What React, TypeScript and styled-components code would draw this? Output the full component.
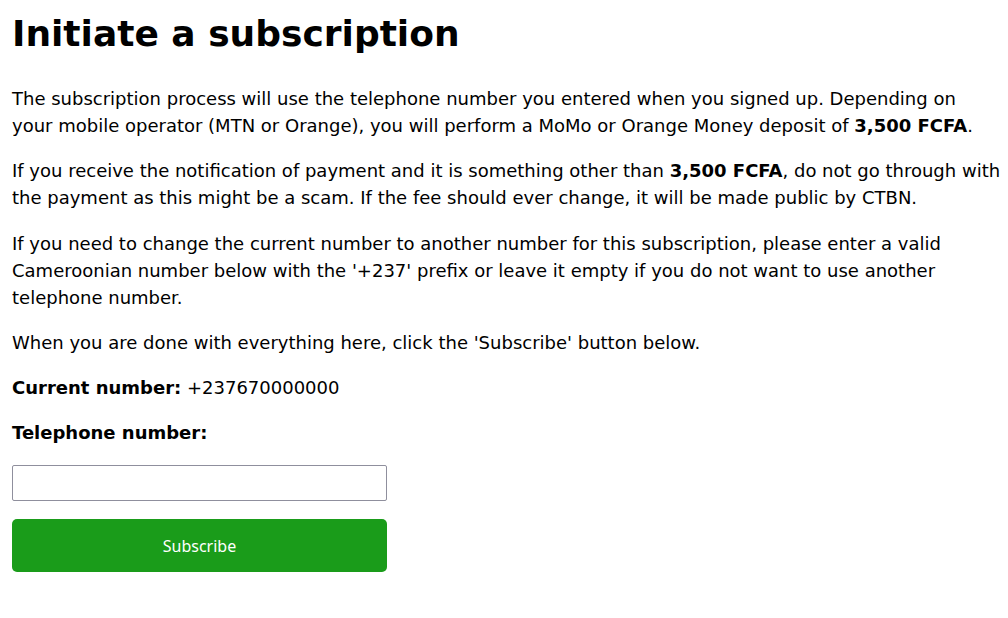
import React, { useState } from 'react';
import styled, { createGlobalStyle } from 'styled-components';

const GlobalStyle = createGlobalStyle`
    body {
        margin: 0;
        background: #ffffff;
        color: #000000;
        font-family: "DejaVu Sans", sans-serif;
    }
`;

export default function App() {
    const [phone, setPhone] = useState('');

    return (
        <>
            <GlobalStyle />
            <Page>
                <Title>Initiate a subscription</Title>
                <Text>
                    The subscription process will use the telephone number you entered when you signed up.
                    Depending on your mobile operator (MTN or Orange), you will perform a MoMo or Orange
                    Money deposit of <b>3,500 FCFA</b>.
                </Text>
                <Text>
                    If you receive the notification of payment and it is something other than <b>3,500 FCFA</b>,
                    do not go through with the payment as this might be a scam. If the fee should ever change,
                    it will be made public by CTBN.
                </Text>
                <Text>
                    If you need to change the current number to another number for this subscription, please
                    enter a valid Cameroonian number below with the '+237' prefix or leave it empty if you do
                    not want to use another telephone number.
                </Text>
                <Text>When you are done with everything here, click the 'Subscribe' button below.</Text>
                <Text>
                    <b>Current number:</b> +237670000000
                </Text>
                <Form onSubmit={(e) => e.preventDefault()}>
                    <Label htmlFor="phone">Telephone number:</Label>
                    <Input
                        id="phone"
                        type="tel"
                        value={phone}
                        onChange={(e) => setPhone(e.target.value)}
                    />
                    <SubmitButton type="submit">Subscribe</SubmitButton>
                </Form>
            </Page>
        </>
    );
}

const Page = styled.main`
    padding: 12px 6px 12px 12px;
`;

const Title = styled.h1`
    font-size: 36px;
    font-weight: bold;
    margin: 0 0 30px;
    line-height: 1.2;
`;

const Text = styled.p`
    font-size: 18px;
    line-height: 27.1px;
    margin: 0 0 18px;
`;

const Form = styled.form`
    display: flex;
    flex-direction: column;
    width: 375px;
`;

const Label = styled.label`
    font-size: 18px;
    font-weight: bold;
    line-height: 27.1px;
    margin-bottom: 19px;
`;

const Input = styled.input`
    box-sizing: border-box;
    height: 36px;
    border: 1px solid #8f8f9d;
    border-radius: 2px;
    padding: 0 8px;
    font-size: 16px;
    margin-bottom: 18px;
`;

const SubmitButton = styled.button`
    height: 53px;
    border: none;
    border-radius: 5px;
    background-color: #1a9c1a;
    color: #ffffff;
    font-family: "Noto Sans", "Open Sans", sans-serif;
    font-size: 16px;
    cursor: pointer;
`;
